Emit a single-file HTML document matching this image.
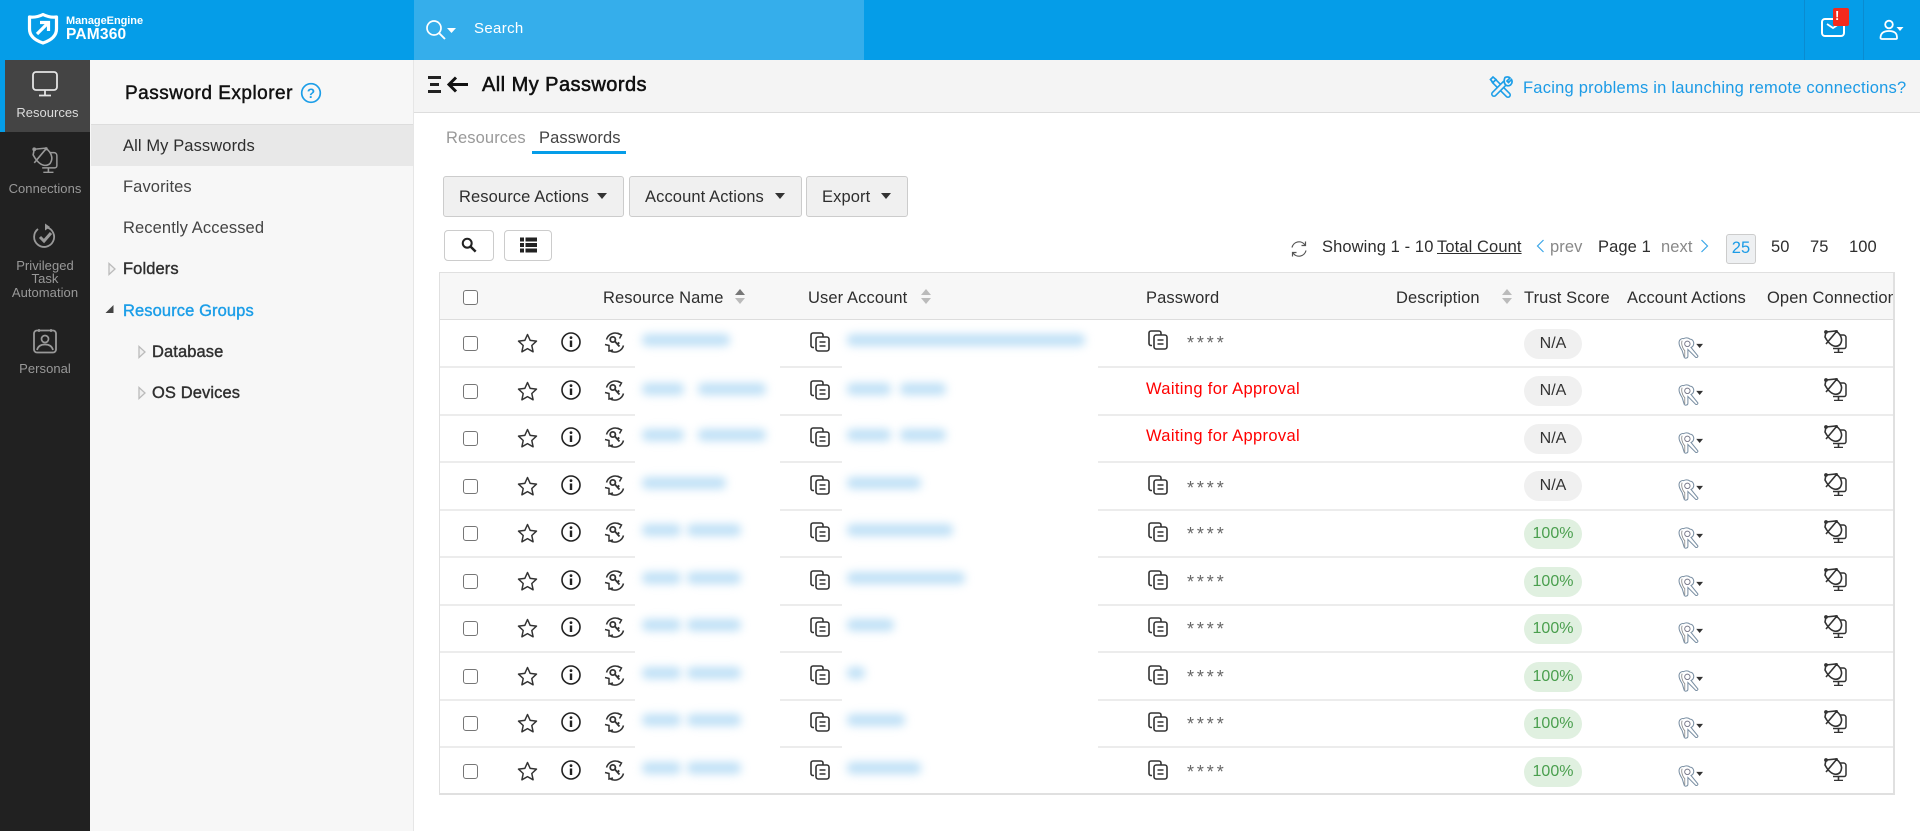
<!DOCTYPE html>
<html><head><meta charset="utf-8"><title>PAM360</title>
<style>
*{box-sizing:border-box}
html,body{margin:0;padding:0;width:1920px;height:831px;overflow:hidden;background:#fff;font-family:"Liberation Sans",sans-serif;color:#333}
.a{position:absolute}
.t{position:absolute;white-space:nowrap;line-height:20px;height:20px;font-size:16.5px;letter-spacing:.1px;color:#2e2e2e;margin-top:1px}
.c{text-align:center}
.r{position:absolute;left:0;width:1920px;height:48px}
.r:after{content:"";position:absolute;left:440px;right:27px;top:47px;height:1.5px;background:linear-gradient(90deg,#ececec 195px,#fff 195px,#fff 340px,#ececec 340px,#ececec 402px,#fff 402px,#fff 658px,#ececec 658px)}
.r.l:after{display:none}
.r svg{position:absolute}
.cb{position:absolute;left:463px;width:15px;height:15px;border:1.4px solid #767676;border-radius:3px;background:#fff}
.bl{position:absolute;height:12px;background:#bfe0f6;filter:blur(4.5px);border-radius:5px}
.pw{position:absolute;left:1187px;font-size:18px;letter-spacing:2.9px;color:#666;line-height:20px;height:20px;margin-top:1px}
.wa{position:absolute;left:1146px;color:#f00;font-size:16.5px;letter-spacing:.35px;line-height:20px;white-space:nowrap;margin-top:1px}
.p{position:absolute;left:1524px;width:58px;height:30px;border-radius:15px;background:#f0f0f0;text-align:center;line-height:30px;font-size:16px;color:#333}
.p.g{background:#e0f0e0;color:#4a9f4e}
.b{position:absolute;top:176px;height:41px;background:#f0f0f0;border:1px solid #ccc;border-radius:3px}
.car{position:absolute;width:0;height:0;border-left:5.5px solid transparent;border-right:5.5px solid transparent;border-top:6px solid #333}
.s{position:absolute;width:12px;height:18px}
.s i{position:absolute;left:1px;width:0;height:0;border-left:5px solid transparent;border-right:5px solid transparent}
.s i:first-child{top:1px;border-bottom:6px solid #bbb}
.s i:last-child{top:10px;border-top:6px solid #bbb}
</style></head><body>
<svg width="0" height="0" style="position:absolute">
<symbol id="star" viewBox="0 0 21 20"><path d="M10.5 1.5l2.7 5.9 6.3.7-4.7 4.4 1.3 6.3-5.6-3.2-5.6 3.2 1.3-6.3L1.5 8.1l6.3-.7z" fill="none" stroke="#333" stroke-width="1.5" stroke-linejoin="round"/></symbol>
<symbol id="info" viewBox="0 0 20 20"><circle cx="10" cy="10" r="9" fill="none" stroke="#222" stroke-width="1.6"/><circle cx="10" cy="5.6" r="1.4" fill="#222"/><path d="M10 8.500v6.500" stroke="#222" stroke-width="2.400"/></symbol>
<symbol id="sync" viewBox="0 0 22 21"><path d="M2.500 7.500A9 9 0 0 1 16 2.500M19.500 13.500A9 9 0 0 1 6 18.700" fill="none" stroke="#333" stroke-width="1.500"/><path d="M13.500 1l4 2-2 3.500M1 12.500l4 1 0 5.500 4-1" fill="none" stroke="#333" stroke-width="1.500"/><circle cx="8.800" cy="7.500" r="2.600" fill="none" stroke="#333" stroke-width="1.800"/><path d="M11 9.500l4.500 5M13.500 12l1.800-1.500" stroke="#333" stroke-width="1.800" fill="none"/></symbol>
<symbol id="copy" viewBox="0 0 20 20"><path d="M4 15.500H3a2 2 0 0 1-2-2V3a2 2 0 0 1 2-2h8a2 2 0 0 1 2 2v2" fill="none" stroke="#333" stroke-width="1.600"/><rect x="6" y="5" width="13" height="14" rx="2.200" fill="#fff" stroke="#333" stroke-width="1.600"/><path d="M9.500 10h6M9.500 14h6" stroke="#333" stroke-width="1.600"/></symbol>
<symbol id="keys" viewBox="0 0 24 21"><path d="M1 5.500C1 2 4 1 5.500 1.500 7 .5 10 .5 11.500 2c2.500 0 4 2.500 3.500 5-.3 1.500-1.300 2.500-2.500 3l6.500 8c.5 1-1 2-2 1.500L9.500 12v6.500c0 1.500-2.500 2.500-3.500 1L4 13C2 10 1 8 1 5.500z" fill="#fff" stroke="#7a8fa3" stroke-width="1"/><path d="M4 3.500C2.800 6 4.300 11 6.500 13V19" fill="none" stroke="#888" stroke-width=".8"/><circle cx="9" cy="6.500" r="2.600" fill="none" stroke="#778" stroke-width=".9"/><path d="M17.500 6.500h6.500l-3.200 4z" fill="#333"/></symbol>
<symbol id="conn" viewBox="0 0 23 23"><path d="M13 5h6.500A2.500 2.500 0 0 1 22 7.500v9a2 2 0 0 1-2 2H9" fill="none" stroke="#333" stroke-width="1.500"/><path d="M14.500 18.500v3.500M10 22.500h9" stroke="#333" stroke-width="1.600" fill="none"/><path d="M2 2l10-1c3 2 5 5 5.500 8 .3 2-.5 4-1.500 5.500-1.500 1.500-4 2-6 1.500C6 15 2.500 10 1 7z" fill="#fff" stroke="#333" stroke-width="1.600"/><path d="M2 14L12.500 1.500" stroke="#333" stroke-width="1.600"/><circle cx="2" cy="2" r="1.900" fill="#333"/><circle cx="12.500" cy="1.500" r="1.500" fill="#333"/></symbol>
<symbol id="tri" viewBox="0 0 8 14"><path d="M1 1.500L7 7 1 12.500z" fill="#f0f0f0" stroke="#bbb" stroke-width="1.300"/></symbol>
</svg>

<!-- top bar -->
<div class="a" style="left:0;top:0;width:1920px;height:60px;background:#059de8"></div>
<div class="a" style="left:414px;top:0;width:450px;height:60px;background:#35aeeb"></div>
<svg class="a" style="left:27px;top:12px" width="32" height="33" viewBox="0 0 32 33"><path d="M16 2.500C21 5 26 5.500 29.500 5v12c0 7-6 11.500-13.500 14C8.500 28.500 2.500 24 2.500 17V5C6.500 5.500 11 5 16 2.500z" fill="none" stroke="#fff" stroke-width="3.200" stroke-linejoin="round"/><path d="M10 22l11-11M13 10.500h8.500V19" fill="none" stroke="#fff" stroke-width="3.200"/></svg>
<div class="t" style="left:66px;top:10px;font-size:11px;font-weight:700;color:#fff;letter-spacing:-.05px">ManageEngine</div>
<div class="t" style="left:66px;top:24px;font-size:15.500px;font-weight:700;color:#fff;letter-spacing:.2px">PAM360</div>
<svg class="a" style="left:425px;top:19px" width="34" height="22" viewBox="0 0 34 22"><circle cx="9" cy="9" r="7" fill="none" stroke="#fff" stroke-width="1.700"/><path d="M14 14l6 6" stroke="#fff" stroke-width="1.900"/><path d="M22 9h9l-4.500 5z" fill="#fff"/></svg>
<div class="t" style="left:474px;top:18px;font-size:15px;color:#fff;letter-spacing:.35px">Search</div>
<div class="a" style="left:1804px;top:0;width:1px;height:60px;background:#0a8bd0"></div>
<div class="a" style="left:1863px;top:0;width:1px;height:60px;background:#0a8bd0"></div>
<svg class="a" style="left:1820px;top:16px" width="28" height="22" viewBox="0 0 28 22"><rect x="2" y="3" width="22" height="17" rx="3" fill="none" stroke="#fff" stroke-width="2"/><path d="M7 8l6 4 6-4" fill="none" stroke="#fff" stroke-width="1.800"/></svg>
<div class="a" style="left:1833px;top:8px;width:16px;height:18px;border-radius:2px;background:#f32a1c;color:#fff;font-weight:700;font-size:13px;line-height:15px;padding-left:2px">!</div>
<svg class="a" style="left:1879px;top:18px" width="25" height="24" viewBox="0 0 25 24"><circle cx="10" cy="6.500" r="3.800" fill="none" stroke="#fff" stroke-width="1.800"/><path d="M1.500 20c0-5 3-7 8.500-7 3 0 5 .6 6.500 2 1.300 1.200 1.500 3 1.500 5 0 .6-.5 1-1 1H3c-1 0-1.500-.5-1.500-1z" fill="none" stroke="#fff" stroke-width="1.800"/><path d="M17.500 9h7l-3.500 4z" fill="#fff"/></svg>

<!-- left nav -->
<div class="a" style="left:0;top:60px;width:90px;height:771px;background:#212121"></div>
<div class="a" style="left:0;top:60px;width:5px;height:72px;background:#059de8"></div>
<div class="a" style="left:5px;top:60px;width:85px;height:72px;background:#444"></div>
<svg class="a" style="left:32px;top:71px" width="26" height="26" viewBox="0 0 26 26"><rect x="1" y="1" width="24" height="18" rx="3" fill="none" stroke="#e4e4e4" stroke-width="1.800"/><path d="M13 19v5M7 24.500h12" stroke="#e4e4e4" stroke-width="1.800"/></svg>
<div class="t c" style="left:0;width:90px;padding-left:5px;top:102px;font-size:13px;color:#ddd;letter-spacing:0">Resources</div>
<svg class="a" style="left:32px;top:147px" width="26" height="26" viewBox="0 0 23 23"><path d="M13 5h6.500A2.500 2.500 0 0 1 22 7.500v9a2 2 0 0 1-2 2H9" fill="none" stroke="#999" stroke-width="1.300"/><path d="M14.500 18.500v3.500M10 22.500h9" stroke="#999" stroke-width="1.400" fill="none"/><path d="M2 2l10-1c3 2 5 5 5.500 8 .3 2-.5 4-1.500 5.500-1.500 1.500-4 2-6 1.500C6 15 2.500 10 1 7z" fill="#212121" stroke="#999" stroke-width="1.400"/><path d="M2 14L12.500 1.500" stroke="#999" stroke-width="1.400"/><circle cx="2" cy="2" r="1.700" fill="#999"/><circle cx="12.500" cy="1.500" r="1.400" fill="#999"/></svg>
<div class="t c" style="left:0;width:90px;top:178px;font-size:13px;color:#999;letter-spacing:.05px">Connections</div>
<svg class="a" style="left:33px;top:223px" width="24" height="26" viewBox="0 0 24 26"><path d="M13.500 4.200A10 10 0 1 1 5 6" fill="none" stroke="#999" stroke-width="1.800"/><path d="M12 .5l5 3.500-5 3.500z" fill="#999"/><path d="M7 14l4 4 7-8" fill="none" stroke="#999" stroke-width="3"/></svg>
<div class="t c" style="left:0;width:90px;top:255px;font-size:13px;color:#999;letter-spacing:.05px">Privileged</div>
<div class="t c" style="left:0;width:90px;top:268px;font-size:13px;color:#999;letter-spacing:.05px">Task</div>
<div class="t c" style="left:0;width:90px;top:282px;font-size:13px;color:#999;letter-spacing:.05px">Automation</div>
<svg class="a" style="left:33px;top:328px" width="24" height="26" viewBox="0 0 24 26"><rect x="1" y="2.500" width="22" height="22" rx="3" fill="none" stroke="#999" stroke-width="1.800"/><path d="M6 1v3M18 1v3" stroke="#999" stroke-width="1.500"/><circle cx="12" cy="11" r="3.500" fill="none" stroke="#999" stroke-width="1.700"/><path d="M4 22c1-4 4-5.500 8-5.500s7 1.500 8 5.500" fill="none" stroke="#999" stroke-width="1.700"/></svg>
<div class="t c" style="left:0;width:90px;top:358px;font-size:13px;color:#999;letter-spacing:.05px">Personal</div>

<!-- tree panel -->
<div class="a" style="left:90px;top:60px;width:324px;height:771px;background:#f7f7f7;border-right:1px solid #e6e6e6"></div>
<div class="t" style="left:125px;top:83px;font-size:19px;color:#111;letter-spacing:.5px;-webkit-text-stroke:.45px #111">Password Explorer</div>
<svg class="a" style="left:300px;top:82px" width="22" height="22" viewBox="0 0 22 22"><circle cx="11" cy="11" r="9.300" fill="none" stroke="#1c9ee8" stroke-width="1.700"/><text x="11" y="15.800" text-anchor="middle" font-size="13.500" font-weight="700" fill="#1c9ee8" font-family="Liberation Sans">?</text></svg>
<div class="a" style="left:91px;top:124px;width:322px;height:42px;background:#e8e8e8;border-top:1px solid #ddd"></div>
<div class="t" style="left:123px;top:135px">All My Passwords</div>
<div class="t" style="left:123px;top:176px;color:#444">Favorites</div>
<div class="t" style="left:123px;top:217px;color:#444">Recently Accessed</div>
<svg class="a" style="left:108px;top:262px" width="8" height="14"><use href="#tri"/></svg>
<div class="t" style="left:123px;top:258px;-webkit-text-stroke:.4px #333">Folders</div>
<svg class="a" style="left:105px;top:304px" width="10" height="10"><path d="M8.500 1v8H.500z" fill="#444"/></svg>
<div class="t" style="left:123px;top:300px;color:#1c9ee8;-webkit-text-stroke:.4px #1c9ee8">Resource Groups</div>
<svg class="a" style="left:138px;top:345px" width="8" height="14"><use href="#tri"/></svg>
<div class="t" style="left:152px;top:341px;-webkit-text-stroke:.4px #333">Database</div>
<svg class="a" style="left:138px;top:386px" width="8" height="14"><use href="#tri"/></svg>
<div class="t" style="left:152px;top:382px;-webkit-text-stroke:.4px #333">OS Devices</div>

<!-- title bar -->
<div class="a" style="left:414px;top:60px;width:1506px;height:53px;background:#f4f4f4;border-bottom:1px solid #ddd"></div>
<svg class="a" style="left:427px;top:75px" width="44" height="20" viewBox="0 0 44 20"><path d="M1 2.500h13M3 9.500h9M1 16.500h13" stroke="#222" stroke-width="3"/><path d="M41 9.500H22M29 2.500l-7 7 7 7" fill="none" stroke="#111" stroke-width="3"/></svg>
<div class="t" style="left:482px;top:74px;font-size:20px;color:#111;letter-spacing:.45px;-webkit-text-stroke:.55px #111">All My Passwords</div>
<svg class="a" style="left:1488px;top:75px" width="26" height="25" viewBox="0 0 26 25">
<path d="M6 6l14 14" stroke="#1c9ee8" stroke-width="6" stroke-linecap="round"/><path d="M6 6l14 14" stroke="#f4f4f4" stroke-width="2.800" stroke-linecap="round"/>
<path d="M2.500 4.500L5 2l3 2.500-3 3z" fill="#f4f4f4" stroke="#1c9ee8" stroke-width="1.700"/>
<path d="M17 8L6 19" stroke="#1c9ee8" stroke-width="6" stroke-linecap="round"/><path d="M17 8L6 19" stroke="#f4f4f4" stroke-width="2.800" stroke-linecap="round"/>
<path d="M17 2.500c2-1 4-.6 5 .5l-3 3 1.500 1.500 3-3c1 2 .5 4-.8 5.300-1.500 1.200-3.500 1.200-5 .2-1.700-1.500-2-5 -.7-7.500z" fill="#f4f4f4" stroke="#1c9ee8" stroke-width="1.700"/></svg>
<div class="t" style="left:1523px;top:77px;color:#1c9be6;letter-spacing:.23px">Facing problems in launching remote connections?</div>

<!-- tabs -->
<div class="t" style="left:446px;top:127px;color:#999">Resources</div>
<div class="t" style="left:539px;top:127px;color:#444">Passwords</div>
<div class="a" style="left:532px;top:151px;width:94px;height:3px;background:#059de8"></div>

<!-- buttons -->
<div class="b" style="left:443px;width:181px"></div><div class="t" style="left:459px;top:186px">Resource Actions</div><div class="car" style="left:597px;top:193px"></div>
<div class="b" style="left:629px;width:173px"></div><div class="t" style="left:645px;top:186px">Account Actions</div><div class="car" style="left:775px;top:193px"></div>
<div class="b" style="left:806px;width:102px"></div><div class="t" style="left:822px;top:186px">Export</div><div class="car" style="left:881px;top:193px"></div>
<div class="a" style="left:444px;top:230px;width:50px;height:31px;border:1px solid #ccc;border-radius:4px"></div>
<svg class="a" style="left:461px;top:237px" width="16" height="16" viewBox="0 0 18 18"><circle cx="7" cy="7" r="5" fill="none" stroke="#222" stroke-width="2.300"/><path d="M10.500 10.500l6 6" stroke="#222" stroke-width="2.800"/></svg>
<div class="a" style="left:504px;top:230px;width:48px;height:31px;border:1px solid #ccc;border-radius:4px"></div>
<svg class="a" style="left:520px;top:237px" width="17" height="16" viewBox="0 0 17 16"><path d="M0 .500h4v4H0zM5.500.500H17v4H5.500zM0 6h4v4H0zM5.500 6H17v4H5.500zM0 11.500h4v4H0zM5.500 11.500H17v4H5.500z" fill="#222"/></svg>

<!-- pagination -->
<svg class="a" style="left:1290px;top:240px" width="18" height="18" viewBox="0 0 18 18"><path d="M2 7.500A7.200 7.200 0 0 1 15 5M16 10.500A7.200 7.200 0 0 1 3 13" fill="none" stroke="#555" stroke-width="1.200"/><path d="M15.500 1.500V5.500H11.500M2.500 16.500V12.500H6.500" fill="none" stroke="#555" stroke-width="1.200"/></svg>
<div class="t" style="left:1322px;top:236px">Showing 1 - 10</div>
<div class="t" style="left:1437px;top:236px;text-decoration:underline">Total Count</div>
<svg class="a" style="left:1536px;top:239px" width="9" height="14"><path d="M7.500 1L1.500 7l6 6" fill="none" stroke="#3aa6e8" stroke-width="1.200"/></svg>
<div class="t" style="left:1550px;top:236px;color:#888">prev</div>
<div class="t" style="left:1598px;top:236px">Page 1</div>
<div class="t" style="left:1661px;top:236px;color:#888">next</div>
<svg class="a" style="left:1700px;top:239px" width="9" height="14"><path d="M1.500 1l6 6-6 6" fill="none" stroke="#3aa6e8" stroke-width="1.200"/></svg>
<div class="a" style="left:1726px;top:234px;width:30px;height:30px;background:#eef0f2;border:1px solid #ccc;border-radius:3px"></div>
<div class="t c" style="left:1726px;width:30px;top:237px;color:#1c9be6">25</div>
<div class="t" style="left:1771px;top:236px">50</div>
<div class="t" style="left:1810px;top:236px">75</div>
<div class="t" style="left:1849px;top:236px">100</div>

<!-- table frame -->
<div class="a" style="left:439px;top:272px;width:1456px;height:523px;border:1px solid #e0e0e0;border-width:1px 2px 2px 1px"></div>
<div class="a" style="left:440px;top:273px;width:1453px;height:46px;background:#f7f7f7"></div>
<div class="a" style="left:440px;top:319px;width:1453px;height:1px;background:#ddd"></div>
<div class="cb" style="top:290px"></div>
<div class="t" style="left:603px;top:287px">Resource Name</div><div class="s" style="left:734px;top:288px"><i style="border-bottom-color:#777"></i><i></i></div>
<div class="t" style="left:808px;top:287px">User Account</div><div class="s" style="left:920px;top:288px"><i></i><i></i></div>
<div class="t" style="left:1146px;top:287px">Password</div>
<div class="t" style="left:1396px;top:287px">Description</div><div class="s" style="left:1501px;top:288px"><i></i><i></i></div>
<div class="t" style="left:1524px;top:287px">Trust Score</div>
<div class="t" style="left:1627px;top:287px">Account Actions</div>
<div class="t" style="left:1767px;top:287px;width:126px;overflow:hidden">Open Connection</div>

<!-- rows -->
<div class="r" style="top:319px"><div class="cb" style="top:17px"></div><svg style="left:517px;top:14px" width="21" height="20"><use href="#star"/></svg><svg style="left:561px;top:13px" width="20" height="20"><use href="#info"/></svg><svg style="left:604px;top:13px" width="22" height="21"><use href="#sync"/></svg><div class="bl" style="left:642px;top:15px;width:88px"></div><svg style="left:810px;top:13px" width="20" height="20"><use href="#copy"/></svg><div class="bl" style="left:847px;top:15px;width:238px"></div><svg style="left:1148px;top:11px" width="20" height="20"><use href="#copy"/></svg><div class="pw" style="top:13px">****</div><div class="p" style="top:10px">N/A</div><svg style="left:1678px;top:18px" width="25" height="22"><use href="#keys"/></svg><svg style="left:1824px;top:11px" width="23" height="23"><use href="#conn"/></svg></div>

<div class="r" style="top:367px"><div class="cb" style="top:17px"></div><svg style="left:517px;top:14px" width="21" height="20"><use href="#star"/></svg><svg style="left:561px;top:13px" width="20" height="20"><use href="#info"/></svg><svg style="left:604px;top:13px" width="22" height="21"><use href="#sync"/></svg><div class="bl" style="left:642px;top:16px;width:42px"></div><div class="bl" style="left:698px;top:16px;width:68px"></div><svg style="left:810px;top:13px" width="20" height="20"><use href="#copy"/></svg><div class="bl" style="left:847px;top:16px;width:44px"></div><div class="bl" style="left:900px;top:16px;width:46px"></div><div class="wa" style="top:11px">Waiting for Approval</div><div class="p" style="top:9px">N/A</div><svg style="left:1678px;top:17px" width="25" height="22"><use href="#keys"/></svg><svg style="left:1824px;top:11px" width="23" height="23"><use href="#conn"/></svg></div>

<div class="r" style="top:414px"><div class="cb" style="top:17px"></div><svg style="left:517px;top:14px" width="21" height="20"><use href="#star"/></svg><svg style="left:561px;top:13px" width="20" height="20"><use href="#info"/></svg><svg style="left:604px;top:13px" width="22" height="21"><use href="#sync"/></svg><div class="bl" style="left:642px;top:15px;width:42px"></div><div class="bl" style="left:698px;top:15px;width:68px"></div><svg style="left:810px;top:13px" width="20" height="20"><use href="#copy"/></svg><div class="bl" style="left:847px;top:15px;width:44px"></div><div class="bl" style="left:900px;top:15px;width:46px"></div><div class="wa" style="top:11px">Waiting for Approval</div><div class="p" style="top:10px">N/A</div><svg style="left:1678px;top:18px" width="25" height="22"><use href="#keys"/></svg><svg style="left:1824px;top:11px" width="23" height="23"><use href="#conn"/></svg></div>

<div class="r" style="top:462px"><div class="cb" style="top:17px"></div><svg style="left:517px;top:14px" width="21" height="20"><use href="#star"/></svg><svg style="left:561px;top:13px" width="20" height="20"><use href="#info"/></svg><svg style="left:604px;top:13px" width="22" height="21"><use href="#sync"/></svg><div class="bl" style="left:642px;top:15px;width:84px"></div><svg style="left:810px;top:13px" width="20" height="20"><use href="#copy"/></svg><div class="bl" style="left:847px;top:15px;width:74px"></div><svg style="left:1148px;top:13px" width="20" height="20"><use href="#copy"/></svg><div class="pw" style="top:15px">****</div><div class="p" style="top:9px">N/A</div><svg style="left:1678px;top:17px" width="25" height="22"><use href="#keys"/></svg><svg style="left:1824px;top:11px" width="23" height="23"><use href="#conn"/></svg></div>

<div class="r" style="top:509px"><div class="cb" style="top:17px"></div><svg style="left:517px;top:14px" width="21" height="20"><use href="#star"/></svg><svg style="left:561px;top:13px" width="20" height="20"><use href="#info"/></svg><svg style="left:604px;top:13px" width="22" height="21"><use href="#sync"/></svg><div class="bl" style="left:642px;top:15px;width:39px"></div><div class="bl" style="left:687px;top:15px;width:54px"></div><svg style="left:810px;top:13px" width="20" height="20"><use href="#copy"/></svg><div class="bl" style="left:847px;top:15px;width:106px"></div><svg style="left:1148px;top:13px" width="20" height="20"><use href="#copy"/></svg><div class="pw" style="top:14px">****</div><div class="p g" style="top:10px">100%</div><svg style="left:1678px;top:18px" width="25" height="22"><use href="#keys"/></svg><svg style="left:1824px;top:11px" width="23" height="23"><use href="#conn"/></svg></div>

<div class="r" style="top:557px"><div class="cb" style="top:17px"></div><svg style="left:517px;top:14px" width="21" height="20"><use href="#star"/></svg><svg style="left:561px;top:13px" width="20" height="20"><use href="#info"/></svg><svg style="left:604px;top:13px" width="22" height="21"><use href="#sync"/></svg><div class="bl" style="left:642px;top:15px;width:39px"></div><div class="bl" style="left:687px;top:15px;width:54px"></div><svg style="left:810px;top:13px" width="20" height="20"><use href="#copy"/></svg><div class="bl" style="left:847px;top:15px;width:118px"></div><svg style="left:1148px;top:13px" width="20" height="20"><use href="#copy"/></svg><div class="pw" style="top:14px">****</div><div class="p g" style="top:10px">100%</div><svg style="left:1678px;top:18px" width="25" height="22"><use href="#keys"/></svg><svg style="left:1824px;top:11px" width="23" height="23"><use href="#conn"/></svg></div>

<div class="r" style="top:604px"><div class="cb" style="top:17px"></div><svg style="left:517px;top:14px" width="21" height="20"><use href="#star"/></svg><svg style="left:561px;top:13px" width="20" height="20"><use href="#info"/></svg><svg style="left:604px;top:13px" width="22" height="21"><use href="#sync"/></svg><div class="bl" style="left:642px;top:15px;width:39px"></div><div class="bl" style="left:687px;top:15px;width:54px"></div><svg style="left:810px;top:13px" width="20" height="20"><use href="#copy"/></svg><div class="bl" style="left:847px;top:15px;width:47px"></div><svg style="left:1148px;top:13px" width="20" height="20"><use href="#copy"/></svg><div class="pw" style="top:14px">****</div><div class="p g" style="top:10px">100%</div><svg style="left:1678px;top:18px" width="25" height="22"><use href="#keys"/></svg><svg style="left:1824px;top:11px" width="23" height="23"><use href="#conn"/></svg></div>

<div class="r" style="top:652px"><div class="cb" style="top:17px"></div><svg style="left:517px;top:14px" width="21" height="20"><use href="#star"/></svg><svg style="left:561px;top:13px" width="20" height="20"><use href="#info"/></svg><svg style="left:604px;top:13px" width="22" height="21"><use href="#sync"/></svg><div class="bl" style="left:642px;top:15px;width:39px"></div><div class="bl" style="left:687px;top:15px;width:54px"></div><svg style="left:810px;top:13px" width="20" height="20"><use href="#copy"/></svg><div class="bl" style="left:847px;top:15px;width:18px"></div><svg style="left:1148px;top:13px" width="20" height="20"><use href="#copy"/></svg><div class="pw" style="top:14px">****</div><div class="p g" style="top:10px">100%</div><svg style="left:1678px;top:18px" width="25" height="22"><use href="#keys"/></svg><svg style="left:1824px;top:11px" width="23" height="23"><use href="#conn"/></svg></div>

<div class="r" style="top:699px"><div class="cb" style="top:17px"></div><svg style="left:517px;top:14px" width="21" height="20"><use href="#star"/></svg><svg style="left:561px;top:13px" width="20" height="20"><use href="#info"/></svg><svg style="left:604px;top:13px" width="22" height="21"><use href="#sync"/></svg><div class="bl" style="left:642px;top:15px;width:39px"></div><div class="bl" style="left:687px;top:15px;width:54px"></div><svg style="left:810px;top:13px" width="20" height="20"><use href="#copy"/></svg><div class="bl" style="left:847px;top:15px;width:58px"></div><svg style="left:1148px;top:13px" width="20" height="20"><use href="#copy"/></svg><div class="pw" style="top:14px">****</div><div class="p g" style="top:10px">100%</div><svg style="left:1678px;top:18px" width="25" height="22"><use href="#keys"/></svg><svg style="left:1824px;top:11px" width="23" height="23"><use href="#conn"/></svg></div>

<div class="r l" style="top:747px"><div class="cb" style="top:17px"></div><svg style="left:517px;top:14px" width="21" height="20"><use href="#star"/></svg><svg style="left:561px;top:13px" width="20" height="20"><use href="#info"/></svg><svg style="left:604px;top:13px" width="22" height="21"><use href="#sync"/></svg><div class="bl" style="left:642px;top:15px;width:39px"></div><div class="bl" style="left:687px;top:15px;width:54px"></div><svg style="left:810px;top:13px" width="20" height="20"><use href="#copy"/></svg><div class="bl" style="left:847px;top:15px;width:74px"></div><svg style="left:1148px;top:13px" width="20" height="20"><use href="#copy"/></svg><div class="pw" style="top:14px">****</div><div class="p g" style="top:10px">100%</div><svg style="left:1678px;top:18px" width="25" height="22"><use href="#keys"/></svg><svg style="left:1824px;top:11px" width="23" height="23"><use href="#conn"/></svg></div>
</body></html>
